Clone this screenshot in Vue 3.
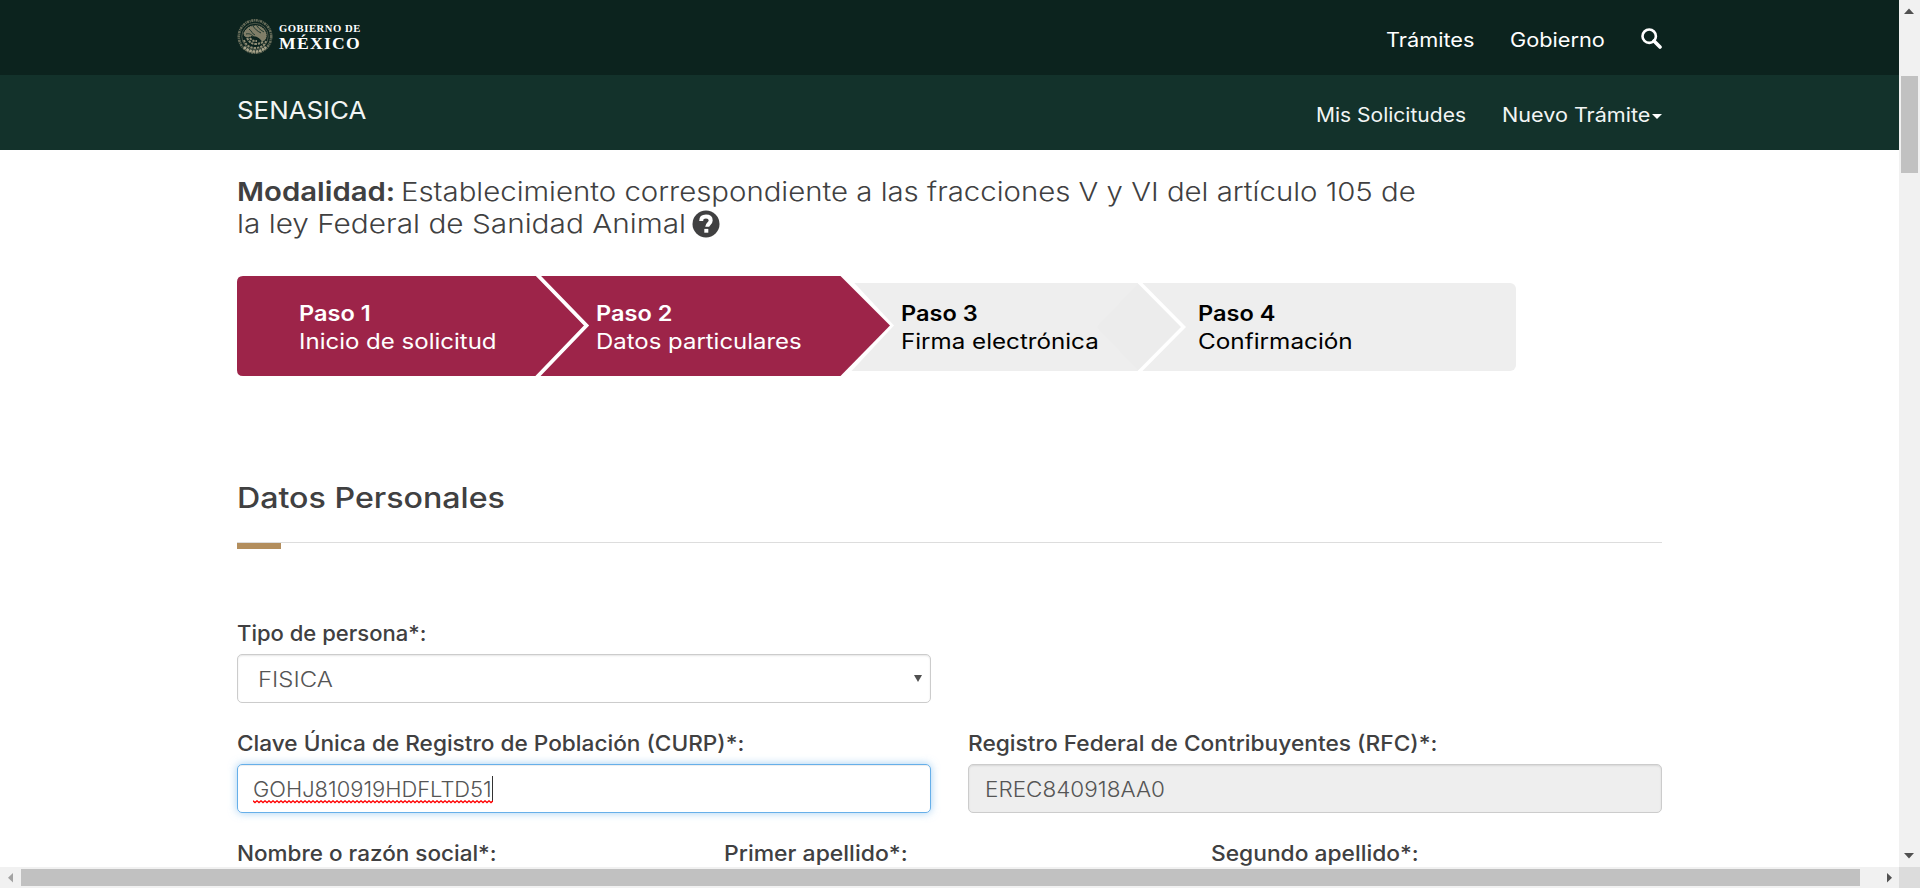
<script setup>
const steps = [
  { title: 'Paso 1', text: 'Inicio de solicitud', cls: 's1' },
  { title: 'Paso 2', text: 'Datos particulares', cls: 's2' },
  { title: 'Paso 3', text: 'Firma electrónica', cls: 's3' },
  { title: 'Paso 4', text: 'Confirmación', cls: 's4' }
]
const wave = Array.from({ length: 121 }, (_, i) => `${i * 2},${i % 2 ? 2.6 : 0.8}`).join(' ')
</script>

<template>
  <div class="window">
    <div class="page">
      <header class="topbar">
        <div class="logo">
          <svg class="seal" width="36" height="37" viewBox="0 0 36 37" fill="none" stroke="#8f8c74">
            <circle cx="18" cy="18.5" r="16.2" stroke-width="2.6" stroke-dasharray="2.2 .7 1 .6" opacity=".7" />
            <circle cx="18" cy="18.5" r="13.2" stroke-width=".8" opacity=".6" />
            <path d="M7 15c2-4 5-7 10-7 6-1 10 2 12 7 1 5-1 8-4 8-2-3-5-5-8-5-3-1-4 1-6 1-3 0-4-1-4-4z" fill="#807e68" stroke-width=".8" stroke-dasharray="1.6 .6" />
            <path d="M12 11c3 2 3 5 6 6m-2-9c2 3 4 5 8 7m-4-7c2 3 4 4 7 6M9 16c4-1 6 1 8 3" stroke="#1f382f" stroke-width="1" />
            <path d="M7 22c1 4 5 8 11 8s10-3 11-7M10 20c3 5 5 6 9 6 3 0 5-1 7-2M13 20c2 3 4 3 7 3" stroke-width="2" stroke-dasharray="2.4 .9" />
            <path d="M7 29c6 6 16 6 22 0" stroke="#a7a38a" stroke-width="2.6" stroke-dasharray="2.5 .7" />
          </svg>
          <div class="wordmark"><span class="gob">GOBIERNO DE</span><span class="mex">MÉXICO</span></div>
        </div>
        <nav class="links">
          <a class="tramites">Trámites</a>
          <a class="gobierno">Gobierno</a>
          <svg class="search" width="21" height="21" viewBox="0 0 21 21" fill="none" stroke="#fff">
            <circle cx="8.2" cy="8.2" r="6.7" stroke-width="2.6" />
            <path d="M13 13l6 6" stroke-width="3.6" stroke-linecap="round" />
          </svg>
        </nav>
      </header>

      <div class="subbar">
        <div class="agency">SENASICA</div>
        <nav class="links sub">
          <a class="mis">Mis Solicitudes</a>
          <a class="nuevo">Nuevo Trámite</a>
          <i class="caret"></i>
        </nav>
      </div>

      <main>
        <h1 class="mode">
          <div class="l1"><b>Modalidad:</b><span>Establecimiento correspondiente a las fracciones V y VI del artículo 105 de</span></div>
          <div class="l2">
            <span>la ley Federal de Sanidad Animal</span>
            <svg width="28" height="28" viewBox="0 0 28 28">
              <circle cx="14" cy="14" r="13.5" fill="#404041" />
              <path d="M9.2 11C9.2 7.900 11.200 6.600 14 6.600s4.700 1.400 4.700 3.900c0 3.100-3.500 3.300-3.500 6.300" fill="none" stroke="#fff" stroke-width="4" />
              <path d="M12.300 18.900h4v3.800h-4z" fill="#fff" />
            </svg>
          </div>
        </h1>

        <section class="steps">
          <svg class="shapes" width="1280" height="104" viewBox="0 0 1280 104">
            <rect x="590" y="9" width="689" height="88" rx="6" fill="#eee" />
            <path d="M902 9l44 44-44 44-42-44z" fill="#ececec" />
            <path d="M902 8l44.500 45-44.500 45" fill="none" stroke="#fff" stroke-width="3.600" />
            <path d="M602 0H609L657 51.500L609 103H602z" fill="#fff" />
            <path d="M6 2H603.500L653 51.500L603.500 102H6Q0 102 0 96V8Q0 2 6 2z" fill="#9d2449" />
            <path d="M299 -0.500L349.500 51.500L299 104" fill="none" stroke="#fff" stroke-width="3.800" />
          </svg>
          <div v-for="s in steps" :key="s.title" class="step" :class="s.cls">
            <b>{{ s.title }}</b><span>{{ s.text }}</span>
          </div>
        </section>

        <h2>Datos Personales</h2>
        <div class="rule"><i></i></div>

        <form class="form" @submit.prevent>
          <div class="row">
            <div class="field">
              <label class="tipo">Tipo de persona*:</label>
              <div class="control select"><span>FISICA</span><i></i></div>
            </div>
          </div>
          <div class="row">
            <div class="field">
              <label class="lcurp">Clave Única de Registro de Población (CURP)*:</label>
              <div class="control focused">
                <div class="value">
                  <span class="curp">GOHJ810919HDFLTD51</span>
                  <svg class="wave" width="240" height="4" viewBox="0 0 240 4"><polyline :points="wave" fill="none" stroke="#f00" stroke-width="1.300" /></svg>
                </div>
                <i class="cursor"></i>
              </div>
            </div>
            <div class="field">
              <label class="lrfc">Registro Federal de Contribuyentes (RFC)*:</label>
              <div class="control disabled"><span class="rfc">EREC840918AA0</span></div>
            </div>
          </div>
          <div class="row thirds">
            <label class="nombre">Nombre o razón social*:</label>
            <label class="primer">Primer apellido*:</label>
            <label class="segundo">Segundo apellido*:</label>
          </div>
        </form>
      </main>
    </div>

    <div class="vbar">
      <svg width="21" height="21"><path d="M5 14h10l-5-5.500z" fill="#505050" /></svg>
      <div class="vthumb"></div>
      <svg width="21" height="21"><path d="M5 7h10l-5 5.500z" fill="#505050" /></svg>
    </div>
    <div class="hbar">
      <svg width="21" height="21"><path d="M13 6v9.500L8 10.700z" fill="#a3a3a3" /></svg>
      <div class="hthumb"></div>
      <svg width="21" height="21"><path d="M9 6v9.500l5-4.800z" fill="#505050" /></svg>
    </div>
    <div class="corner"></div>
  </div>
</template>

<style>
html, body { margin: 0; overflow: hidden; background: #fff; }
</style>

<style scoped>
.window {
  width: 1920px;
  height: 888px;
  overflow: hidden;
  display: grid;
  grid-template-columns: 1899px 21px;
  grid-template-rows: 867px 21px;
  font-family: Inter, "Open Sans", sans-serif;
  color: #404041;
  background: #fff;
}
.page { overflow: hidden; }

/* Widened letterforms */
.links a, .agency, .mode b, .mode span, .step b, .step span, h2, label, .control span {
  display: block;
  transform: scaleX(var(--wide, 1.11));
  transform-origin: 0 50%;
}

.topbar, .subbar {
  height: 75px;
  padding: 0 237px;
  box-sizing: border-box;
  display: flex;
  justify-content: space-between;
  color: #fff;
}
.topbar { background: #0c231e; }
.subbar { background: #13322b; }
.logo { display: flex; gap: 6px; padding-top: 18px; }
.wordmark {
  display: flex;
  flex-direction: column;
  padding-top: 4px;
  font-family: "Liberation Serif", serif;
  font-weight: 700;
  white-space: nowrap;
}
.gob { font-size: 10.600px; line-height: 13px; letter-spacing: .560px; }
.mex { font-size: 17.600px; line-height: 16px; letter-spacing: 1.300px; }
.links { display: flex; font-size: 19.400px; line-height: 24px; padding-top: 28px; white-space: nowrap; }
.tramites { --wide: 1.120; width: 124px; }
.gobierno { --wide: 1.120; width: 131px; }
.search { display: block; }
.sub { color: #f2f5f4; }
.mis { --wide: 1.084; width: 186px; }
.nuevo { --wide: 1.113; width: 150px; }
.caret {
  width: 0;
  height: 0;
  margin-top: 11px;
  border: 5px solid transparent;
  border-top-color: #fff;
  border-bottom: 0;
}
.agency { --wide: 1.078; font-size: 24px; line-height: 30px; padding-top: 21px; color: #f2f5f4; }

main { width: 1425px; padding: 26px 0 0 237px; }
.mode { margin: 0; font-size: 26.200px; font-weight: 300; line-height: 32px; white-space: nowrap; }
.l1 { display: flex; }
.l1 b { --wide: 1.120; width: 164px; font-weight: 600; }
.l1 span { --wide: 1.121; }
.l2 { display: flex; align-items: center; }
.l2 span { --wide: 1.137; width: 455px; }

.steps {
  position: relative;
  height: 100px;
  margin-top: 36px;
  display: grid;
  grid-template-columns: 297px 305px 297px 250px;
  padding-left: 62px;
  color: #000;
  font-size: 21.200px;
  line-height: 28px;
}
.shapes { position: absolute; left: 0; top: -2px; }
.step { position: relative; display: flex; flex-direction: column; padding-top: 23px; white-space: nowrap; }
.step b { font-weight: 600; }
.s1, .s2 { color: #fff; }
.s1 span { --wide: 1.133; }
.s2 span { --wide: 1.130; }
.s3 span { --wide: 1.140; }
.s4 span { --wide: 1.147; }

h2 { --wide: 1.133; margin: 102px 0 0; font-size: 28.400px; font-weight: 500; line-height: 40px; }
.rule { height: 8px; margin-top: 24px; border-top: 1px solid #ddd; }
.rule i { display: block; width: 44px; height: 6px; background: #b38e5d; }

.form { padding-top: 67px; }
.row { display: grid; grid-template-columns: 1fr 1fr; gap: 37px; height: 110px; }
.field { display: flex; flex-direction: column; }
label { font-size: 21.200px; font-weight: 500; line-height: 30px; white-space: nowrap; }
.control {
  height: 49px;
  margin-top: 6px;
  box-sizing: border-box;
  display: flex;
  align-items: center;
  border: 1px solid #ccc;
  border-radius: 5px;
  padding: 0 16px;
  box-shadow: inset 0 1px 2px rgba(0, 0, 0, .1);
  font-size: 21.200px;
  font-weight: 300;
  color: #555;
}
.select { justify-content: space-between; padding: 0 8px 0 20px; }
.select span { --wide: 1.130; }
.select i { border: 4px solid transparent; border-top: 7px solid #505050; border-bottom: 0; }
.focused { border-color: #66afe9; box-shadow: inset 0 1px 1px rgba(0, 0, 0, .075), 0 0 9px rgba(102, 175, 233, .6); }
.disabled { background: #eee; }
.value { position: relative; width: 238px; white-space: nowrap; }
.curp { --wide: 1.035; margin-left: -1px; }
.wave { position: absolute; left: -1px; top: 24px; }
.cursor { width: 1px; height: 26px; background: #333; }
.rfc { --wide: 1.062; }
.tipo { --wide: 1.040; }
.lcurp { --wide: 1.068; }
.lrfc { --wide: 1.073; }
.thirds { grid-template-columns: 1fr 1fr 1fr; gap: 0; }
.nombre { --wide: 1.062; }
.primer { --wide: 1.084; margin-left: 12px; }
.segundo { --wide: 1.075; margin-left: 24px; }

.vbar { display: flex; flex-direction: column; justify-content: space-between; background: #f1f1f1; }
.vthumb { flex: none; width: 17px; height: 97px; margin: 55px 2px auto; background: #c1c1c1; }
.hbar { display: flex; align-items: center; background: #f1f1f1; }
.hthumb { width: 1839px; height: 17px; margin-right: 18px; background: #c1c1c1; }
.vbar svg, .hbar svg { display: block; flex: none; }
.corner { background: #dcdcdc; }
</style>
